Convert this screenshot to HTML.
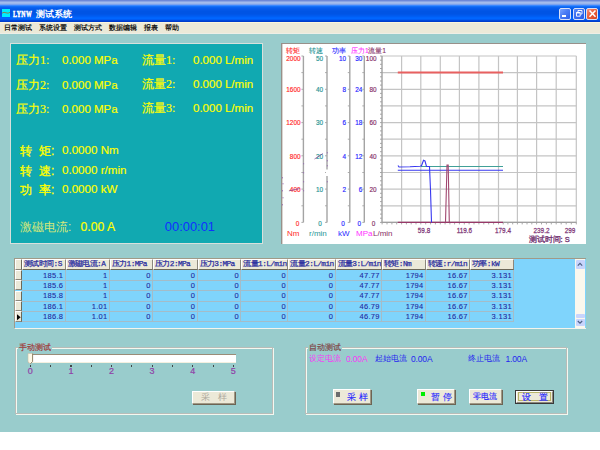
<!DOCTYPE html>
<html><head><meta charset="utf-8">
<style>
*{margin:0;padding:0;box-sizing:border-box}
html,body{width:600px;height:450px;overflow:hidden;background:#fff;font-family:"Liberation Sans",sans-serif}
.a{position:absolute;white-space:nowrap}
#title{position:absolute;left:0;top:0;width:600px;height:22px;background:linear-gradient(to bottom,#6c88d8 0px,#6c88d8 1px,#8aa4e4 1px,#8aa4e4 2px,#a4bcec 2px,#a4bcec 3px,#9ab6ec 3px,#9ab6ec 4px,#7aa2f0 4px,#7aa2f0 5px,#3a88ff 5px,#3a88ff 6px,#1470f8 6px,#1470f8 7px,#0a62f0 7px,#0a62f0 8px,#065cec 8px,#065cec 9px,#0458e8 9px,#0458e8 10px,#0256e6 10px,#0256e6 11px,#0054e4 11px,#0054e4 12px,#0054e4 12px,#0054e4 13px,#0054e4 13px,#0054e4 14px,#0056e8 14px,#0056e8 15px,#005aee 15px,#005aee 16px,#005ef4 16px,#005ef4 17px,#0064fc 17px,#0064fc 18px,#0066ff 18px,#0066ff 19px,#005cf4 19px,#005cf4 20px,#0048dc 20px,#0048dc 21px,#003ccc 21px,#003ccc 22px)}
#menu{position:absolute;left:0;top:22px;width:600px;height:12px;background:#ece9d8;border-top:1px solid #fbf5dc;border-bottom:1px solid #eeeee6}
#bg{position:absolute;left:0;top:34px;width:600px;height:398px;background:#99cccc}
.tb{position:absolute;top:8px;width:12px;height:12px;border:1px solid #d8e0f8;border-radius:2px}
.menu{position:absolute;top:23px;font-size:7px;line-height:9px;color:#000;-webkit-text-stroke:0.2px #000}
#lp{position:absolute;left:10px;top:43px;width:253px;height:201px;background:#11a9b1;border:1px solid #d8e0dc}
.y{color:#ffff00;font-size:12px;line-height:14px;-webkit-text-stroke:0.2px #ffff00}
.yb{-webkit-text-stroke:0.35px #ffff00}
.sf{font-family:"Liberation Serif",serif;-webkit-text-stroke:0.2px #ffff00}
.v{color:#ffff00;-webkit-text-stroke:0.2px #ffff00;font-size:11.5px;line-height:14px}
#cp{position:absolute;left:281px;top:43px;width:305px;height:201px;background:#fff;border-top:1px solid #98908a;border-left:1px solid #98908a;box-shadow:inset 1px 0 0 #d8d4d0}
#grid{position:absolute;left:14px;top:258px;width:572px;height:71px;background:#7fd4fc;border:1px solid #a8a490}
.hd{top:259px;height:11px;background:#ece9d8;border-right:1px solid #8c887c;border-bottom:1px solid #6c6858;border-left:1px solid #fff;border-top:1px solid #fff;font-family:"Liberation Mono",monospace;-webkit-text-stroke:0.25px #2a2ea0;font-size:7.8px;letter-spacing:-0.6px;line-height:9px;color:#2a2ea0;padding-left:1px;overflow:hidden}
.cell{position:absolute;font-family:"Liberation Sans",sans-serif;-webkit-text-stroke:0.1px #1f2aa0;letter-spacing:0.3px;font-size:7.5px;line-height:10px;color:#1f2aa0;text-align:right}
.gl{position:absolute;background:#a4bcc8}
.grp{position:absolute;border:1px solid #b8bcb8;box-shadow:inset 1px 1px 0 #f4f8f0,1px 1px 0 #f4f8f0}
.btn{position:absolute;background:#ece9d8;border:1px solid;border-color:#fff #a09884 #a09884 #fff;box-shadow:1px 1px 0 #6c6454;font-size:11px;line-height:12px;text-align:center;color:#1a2ae0}
</style></head><body>
<div id="title"></div>
<div class="a" style="left:2px;top:9px;width:8px;height:8px;background:#00f0ff"></div>
<svg class="a" style="left:2px;top:9px" width="8" height="8"><path d="M0 4.2 Q2 2.6 4 3.8 T8.5 3" stroke="#8a8050" stroke-width="1" fill="none"/></svg>
<div class="a" style="left:13.3px;top:9.8px;font:bold 8px/10px 'Liberation Serif';letter-spacing:0.6px;transform:scaleX(0.72);transform-origin:0 0;color:#fff;-webkit-text-stroke:0.5px #fff">LYNW</div>
<div class="a" style="left:36px;top:9px;font:bold 8.7px/10px 'Liberation Sans';color:#fff">测试系统</div>
<div class="tb" style="left:559px;background:linear-gradient(135deg,#7aa4ff 0%,#4a7cf4 45%,#2c60ea 100%)"><div class="a" style="left:2.2px;top:6.2px;width:4.2px;height:1.9px;background:#fff"></div></div>
<div class="tb" style="left:573px;background:linear-gradient(135deg,#5a8af8 0%,#3a6cf0 45%,#2a5ee8 100%)"><svg class="a" style="left:0;top:0" width="10" height="10"><path d="M4 3.3V1.5H8V5H6.5M2.5 3.5H6.2V7.2H2.5Z" stroke="#fff" stroke-width="0.9" fill="none"/><path d="M2.5 3.8H6.2" stroke="#fff" stroke-width="1.3"/></svg></div>
<div class="tb" style="left:586px;background:linear-gradient(135deg,#f4907a 0%,#e86040 45%,#d84420 100%)"><svg class="a" style="left:0;top:0" width="10" height="10"><path d="M2.5 1.5L8.5 7.8M8.5 1.5L2.5 7.8" stroke="#fff" stroke-width="1.5"/></svg></div>
<div id="menu"></div>
<div class="menu" style="left:4px">日常测试</div>
<div class="menu" style="left:39px">系统设置</div>
<div class="menu" style="left:74px">测试方式</div>
<div class="menu" style="left:109px">数据编辑</div>
<div class="menu" style="left:144px">报表</div>
<div class="menu" style="left:165px">帮助</div>
<div id="bg"></div>

<!-- left panel -->
<div id="lp"></div>
<div class="a y" style="left:16px;top:52.5px">压力<span class="sf">1:</span></div>
<div class="a v" style="left:62px;top:52.5px">0.000 MPa</div>
<div class="a y" style="left:16px;top:77.5px">压力<span class="sf">2:</span></div>
<div class="a v" style="left:62px;top:77.5px">0.000 MPa</div>
<div class="a y" style="left:16px;top:102.2px">压力<span class="sf">3:</span></div>
<div class="a v" style="left:62px;top:102.2px">0.000 MPa</div>
<div class="a y" style="left:142px;top:52.5px">流量<span class="sf">1:</span></div>
<div class="a v" style="left:193px;top:52.5px">0.000 L/min</div>
<div class="a y" style="left:142px;top:76.5px">流量<span class="sf">2:</span></div>
<div class="a v" style="left:193px;top:76.5px">0.000 L/min</div>
<div class="a y" style="left:142px;top:100.7px">流量<span class="sf">3:</span></div>
<div class="a v" style="left:193px;top:100.7px">0.000 L/min</div>
<div class="a y yb" style="left:20px;top:143.5px">转<span style="display:inline-block;width:7px"></span>矩:</div>
<div class="a v" style="left:62px;top:143px;font-size:11.6px">0.0000 Nm</div>
<div class="a y yb" style="left:20px;top:163.5px">转<span style="display:inline-block;width:7px"></span>速:</div>
<div class="a v" style="left:62px;top:163px;font-size:11.6px">0.0000 r/min</div>
<div class="a y yb" style="left:20px;top:182.5px">功<span style="display:inline-block;width:7px"></span>率:</div>
<div class="a v" style="left:62px;top:182px;font-size:11.6px">0.0000 kW</div>
<div class="a y" style="left:20px;top:220px;color:#d6e87a;-webkit-text-stroke:0">激磁电流:</div>
<div class="a v" style="left:80.5px;top:220px;font-size:12.2px">0.00 A</div>
<div class="a" style="left:164.8px;top:219px;font-size:12.9px;line-height:16px;color:#1030ff">00:00:01</div>

<!-- chart panel -->
<div id="cp"></div>
<svg class="a" style="left:0;top:0" width="600" height="450" font-family="Liberation Sans" font-size="8">
<line x1="382.0" y1="56.0" x2="576.4" y2="56.0" stroke="#c4c4c4" stroke-width="1.2"/>
<line x1="382.0" y1="72.6" x2="576.4" y2="72.6" stroke="#c4c4c4" stroke-width="1.2"/>
<line x1="382.0" y1="89.3" x2="576.4" y2="89.3" stroke="#c4c4c4" stroke-width="1.2"/>
<line x1="382.0" y1="105.9" x2="576.4" y2="105.9" stroke="#c4c4c4" stroke-width="1.2"/>
<line x1="382.0" y1="122.6" x2="576.4" y2="122.6" stroke="#c4c4c4" stroke-width="1.2"/>
<line x1="382.0" y1="139.2" x2="576.4" y2="139.2" stroke="#c4c4c4" stroke-width="1.2"/>
<line x1="382.0" y1="155.8" x2="576.4" y2="155.8" stroke="#c4c4c4" stroke-width="1.2"/>
<line x1="382.0" y1="172.5" x2="576.4" y2="172.5" stroke="#c4c4c4" stroke-width="1.2"/>
<line x1="382.0" y1="189.1" x2="576.4" y2="189.1" stroke="#c4c4c4" stroke-width="1.2"/>
<line x1="382.0" y1="205.8" x2="576.4" y2="205.8" stroke="#c4c4c4" stroke-width="1.2"/>
<line x1="382.0" y1="222.4" x2="576.4" y2="222.4" stroke="#c4c4c4" stroke-width="1.2"/>
<line x1="401.6" y1="56.0" x2="401.6" y2="222.4" stroke="#c4c4c4" stroke-width="1.2"/>
<line x1="420.8" y1="56.0" x2="420.8" y2="222.4" stroke="#c4c4c4" stroke-width="1.2"/>
<line x1="440.3" y1="56.0" x2="440.3" y2="222.4" stroke="#c4c4c4" stroke-width="1.2"/>
<line x1="459.4" y1="56.0" x2="459.4" y2="222.4" stroke="#c4c4c4" stroke-width="1.2"/>
<line x1="478.9" y1="56.0" x2="478.9" y2="222.4" stroke="#c4c4c4" stroke-width="1.2"/>
<line x1="498.5" y1="56.0" x2="498.5" y2="222.4" stroke="#c4c4c4" stroke-width="1.2"/>
<line x1="517.4" y1="56.0" x2="517.4" y2="222.4" stroke="#c4c4c4" stroke-width="1.2"/>
<line x1="536.6" y1="56.0" x2="536.6" y2="222.4" stroke="#c4c4c4" stroke-width="1.2"/>
<line x1="556.2" y1="56.0" x2="556.2" y2="222.4" stroke="#c4c4c4" stroke-width="1.2"/>
<line x1="576.3" y1="56.0" x2="576.3" y2="222.4" stroke="#c4c4c4" stroke-width="1.2"/>
<line x1="380.0" y1="56.0" x2="382.0" y2="56.0" stroke="#909090" stroke-width="0.8"/>
<line x1="380.0" y1="60.2" x2="382.0" y2="60.2" stroke="#909090" stroke-width="0.8"/>
<line x1="380.0" y1="64.3" x2="382.0" y2="64.3" stroke="#909090" stroke-width="0.8"/>
<line x1="380.0" y1="68.5" x2="382.0" y2="68.5" stroke="#909090" stroke-width="0.8"/>
<line x1="380.0" y1="72.6" x2="382.0" y2="72.6" stroke="#909090" stroke-width="0.8"/>
<line x1="380.0" y1="76.8" x2="382.0" y2="76.8" stroke="#909090" stroke-width="0.8"/>
<line x1="380.0" y1="81.0" x2="382.0" y2="81.0" stroke="#909090" stroke-width="0.8"/>
<line x1="380.0" y1="85.1" x2="382.0" y2="85.1" stroke="#909090" stroke-width="0.8"/>
<line x1="380.0" y1="89.3" x2="382.0" y2="89.3" stroke="#909090" stroke-width="0.8"/>
<line x1="380.0" y1="93.4" x2="382.0" y2="93.4" stroke="#909090" stroke-width="0.8"/>
<line x1="380.0" y1="97.6" x2="382.0" y2="97.6" stroke="#909090" stroke-width="0.8"/>
<line x1="380.0" y1="101.8" x2="382.0" y2="101.8" stroke="#909090" stroke-width="0.8"/>
<line x1="380.0" y1="105.9" x2="382.0" y2="105.9" stroke="#909090" stroke-width="0.8"/>
<line x1="380.0" y1="110.1" x2="382.0" y2="110.1" stroke="#909090" stroke-width="0.8"/>
<line x1="380.0" y1="114.2" x2="382.0" y2="114.2" stroke="#909090" stroke-width="0.8"/>
<line x1="380.0" y1="118.4" x2="382.0" y2="118.4" stroke="#909090" stroke-width="0.8"/>
<line x1="380.0" y1="122.6" x2="382.0" y2="122.6" stroke="#909090" stroke-width="0.8"/>
<line x1="380.0" y1="126.7" x2="382.0" y2="126.7" stroke="#909090" stroke-width="0.8"/>
<line x1="380.0" y1="130.9" x2="382.0" y2="130.9" stroke="#909090" stroke-width="0.8"/>
<line x1="380.0" y1="135.0" x2="382.0" y2="135.0" stroke="#909090" stroke-width="0.8"/>
<line x1="380.0" y1="139.2" x2="382.0" y2="139.2" stroke="#909090" stroke-width="0.8"/>
<line x1="380.0" y1="143.4" x2="382.0" y2="143.4" stroke="#909090" stroke-width="0.8"/>
<line x1="380.0" y1="147.5" x2="382.0" y2="147.5" stroke="#909090" stroke-width="0.8"/>
<line x1="380.0" y1="151.7" x2="382.0" y2="151.7" stroke="#909090" stroke-width="0.8"/>
<line x1="380.0" y1="155.8" x2="382.0" y2="155.8" stroke="#909090" stroke-width="0.8"/>
<line x1="380.0" y1="160.0" x2="382.0" y2="160.0" stroke="#909090" stroke-width="0.8"/>
<line x1="380.0" y1="164.2" x2="382.0" y2="164.2" stroke="#909090" stroke-width="0.8"/>
<line x1="380.0" y1="168.3" x2="382.0" y2="168.3" stroke="#909090" stroke-width="0.8"/>
<line x1="380.0" y1="172.5" x2="382.0" y2="172.5" stroke="#909090" stroke-width="0.8"/>
<line x1="380.0" y1="176.6" x2="382.0" y2="176.6" stroke="#909090" stroke-width="0.8"/>
<line x1="380.0" y1="180.8" x2="382.0" y2="180.8" stroke="#909090" stroke-width="0.8"/>
<line x1="380.0" y1="185.0" x2="382.0" y2="185.0" stroke="#909090" stroke-width="0.8"/>
<line x1="380.0" y1="189.1" x2="382.0" y2="189.1" stroke="#909090" stroke-width="0.8"/>
<line x1="380.0" y1="193.3" x2="382.0" y2="193.3" stroke="#909090" stroke-width="0.8"/>
<line x1="380.0" y1="197.4" x2="382.0" y2="197.4" stroke="#909090" stroke-width="0.8"/>
<line x1="380.0" y1="201.6" x2="382.0" y2="201.6" stroke="#909090" stroke-width="0.8"/>
<line x1="380.0" y1="205.8" x2="382.0" y2="205.8" stroke="#909090" stroke-width="0.8"/>
<line x1="380.0" y1="209.9" x2="382.0" y2="209.9" stroke="#909090" stroke-width="0.8"/>
<line x1="380.0" y1="214.1" x2="382.0" y2="214.1" stroke="#909090" stroke-width="0.8"/>
<line x1="380.0" y1="218.2" x2="382.0" y2="218.2" stroke="#909090" stroke-width="0.8"/>
<line x1="380.0" y1="222.4" x2="382.0" y2="222.4" stroke="#909090" stroke-width="0.8"/>
<line x1="382.1" y1="222.4" x2="382.1" y2="224.4" stroke="#909090" stroke-width="0.8"/>
<line x1="387.0" y1="222.4" x2="387.0" y2="224.4" stroke="#909090" stroke-width="0.8"/>
<line x1="391.9" y1="222.4" x2="391.9" y2="224.4" stroke="#909090" stroke-width="0.8"/>
<line x1="396.7" y1="222.4" x2="396.7" y2="224.4" stroke="#909090" stroke-width="0.8"/>
<line x1="401.6" y1="222.4" x2="401.6" y2="224.4" stroke="#909090" stroke-width="0.8"/>
<line x1="406.4" y1="222.4" x2="406.4" y2="224.4" stroke="#909090" stroke-width="0.8"/>
<line x1="411.2" y1="222.4" x2="411.2" y2="224.4" stroke="#909090" stroke-width="0.8"/>
<line x1="416.0" y1="222.4" x2="416.0" y2="224.4" stroke="#909090" stroke-width="0.8"/>
<line x1="420.8" y1="222.4" x2="420.8" y2="224.4" stroke="#909090" stroke-width="0.8"/>
<line x1="425.7" y1="222.4" x2="425.7" y2="224.4" stroke="#909090" stroke-width="0.8"/>
<line x1="430.6" y1="222.4" x2="430.6" y2="224.4" stroke="#909090" stroke-width="0.8"/>
<line x1="435.4" y1="222.4" x2="435.4" y2="224.4" stroke="#909090" stroke-width="0.8"/>
<line x1="440.3" y1="222.4" x2="440.3" y2="224.4" stroke="#909090" stroke-width="0.8"/>
<line x1="445.1" y1="222.4" x2="445.1" y2="224.4" stroke="#909090" stroke-width="0.8"/>
<line x1="449.9" y1="222.4" x2="449.9" y2="224.4" stroke="#909090" stroke-width="0.8"/>
<line x1="454.6" y1="222.4" x2="454.6" y2="224.4" stroke="#909090" stroke-width="0.8"/>
<line x1="459.4" y1="222.4" x2="459.4" y2="224.4" stroke="#909090" stroke-width="0.8"/>
<line x1="464.3" y1="222.4" x2="464.3" y2="224.4" stroke="#909090" stroke-width="0.8"/>
<line x1="469.1" y1="222.4" x2="469.1" y2="224.4" stroke="#909090" stroke-width="0.8"/>
<line x1="474.0" y1="222.4" x2="474.0" y2="224.4" stroke="#909090" stroke-width="0.8"/>
<line x1="478.9" y1="222.4" x2="478.9" y2="224.4" stroke="#909090" stroke-width="0.8"/>
<line x1="483.8" y1="222.4" x2="483.8" y2="224.4" stroke="#909090" stroke-width="0.8"/>
<line x1="488.7" y1="222.4" x2="488.7" y2="224.4" stroke="#909090" stroke-width="0.8"/>
<line x1="493.6" y1="222.4" x2="493.6" y2="224.4" stroke="#909090" stroke-width="0.8"/>
<line x1="498.5" y1="222.4" x2="498.5" y2="224.4" stroke="#909090" stroke-width="0.8"/>
<line x1="503.2" y1="222.4" x2="503.2" y2="224.4" stroke="#909090" stroke-width="0.8"/>
<line x1="507.9" y1="222.4" x2="507.9" y2="224.4" stroke="#909090" stroke-width="0.8"/>
<line x1="512.7" y1="222.4" x2="512.7" y2="224.4" stroke="#909090" stroke-width="0.8"/>
<line x1="517.4" y1="222.4" x2="517.4" y2="224.4" stroke="#909090" stroke-width="0.8"/>
<line x1="522.2" y1="222.4" x2="522.2" y2="224.4" stroke="#909090" stroke-width="0.8"/>
<line x1="527.0" y1="222.4" x2="527.0" y2="224.4" stroke="#909090" stroke-width="0.8"/>
<line x1="531.8" y1="222.4" x2="531.8" y2="224.4" stroke="#909090" stroke-width="0.8"/>
<line x1="536.6" y1="222.4" x2="536.6" y2="224.4" stroke="#909090" stroke-width="0.8"/>
<line x1="541.5" y1="222.4" x2="541.5" y2="224.4" stroke="#909090" stroke-width="0.8"/>
<line x1="546.4" y1="222.4" x2="546.4" y2="224.4" stroke="#909090" stroke-width="0.8"/>
<line x1="551.3" y1="222.4" x2="551.3" y2="224.4" stroke="#909090" stroke-width="0.8"/>
<line x1="556.2" y1="222.4" x2="556.2" y2="224.4" stroke="#909090" stroke-width="0.8"/>
<line x1="561.2" y1="222.4" x2="561.2" y2="224.4" stroke="#909090" stroke-width="0.8"/>
<line x1="566.2" y1="222.4" x2="566.2" y2="224.4" stroke="#909090" stroke-width="0.8"/>
<line x1="571.3" y1="222.4" x2="571.3" y2="224.4" stroke="#909090" stroke-width="0.8"/>
<line x1="576.3" y1="222.4" x2="576.3" y2="224.4" stroke="#909090" stroke-width="0.8"/>
<line x1="382.0" y1="56.0" x2="382.0" y2="222.4" stroke="#a0a0a0" stroke-width="1.4"/>
<line x1="382.0" y1="222.4" x2="576.4" y2="222.4" stroke="#a0a0a0" stroke-width="1.4"/>
<line x1="303.4" y1="56.0" x2="303.4" y2="222.4" stroke="#a4a4a4" stroke-width="1.4"/>
<line x1="301.4" y1="56.0" x2="303.4" y2="56.0" stroke="#a4a4a4" stroke-width="0.9"/>
<line x1="301.4" y1="72.6" x2="303.4" y2="72.6" stroke="#a4a4a4" stroke-width="0.9"/>
<line x1="301.4" y1="89.3" x2="303.4" y2="89.3" stroke="#a4a4a4" stroke-width="0.9"/>
<line x1="301.4" y1="105.9" x2="303.4" y2="105.9" stroke="#a4a4a4" stroke-width="0.9"/>
<line x1="301.4" y1="122.6" x2="303.4" y2="122.6" stroke="#a4a4a4" stroke-width="0.9"/>
<line x1="301.4" y1="139.2" x2="303.4" y2="139.2" stroke="#a4a4a4" stroke-width="0.9"/>
<line x1="301.4" y1="155.8" x2="303.4" y2="155.8" stroke="#a4a4a4" stroke-width="0.9"/>
<line x1="301.4" y1="172.5" x2="303.4" y2="172.5" stroke="#a4a4a4" stroke-width="0.9"/>
<line x1="301.4" y1="189.1" x2="303.4" y2="189.1" stroke="#a4a4a4" stroke-width="0.9"/>
<line x1="301.4" y1="205.8" x2="303.4" y2="205.8" stroke="#a4a4a4" stroke-width="0.9"/>
<line x1="301.4" y1="222.4" x2="303.4" y2="222.4" stroke="#a4a4a4" stroke-width="0.9"/>
<line x1="327.0" y1="56.0" x2="327.0" y2="222.4" stroke="#a4a4a4" stroke-width="1.4"/>
<line x1="325.0" y1="56.0" x2="327.0" y2="56.0" stroke="#a4a4a4" stroke-width="0.9"/>
<line x1="325.0" y1="72.6" x2="327.0" y2="72.6" stroke="#a4a4a4" stroke-width="0.9"/>
<line x1="325.0" y1="89.3" x2="327.0" y2="89.3" stroke="#a4a4a4" stroke-width="0.9"/>
<line x1="325.0" y1="105.9" x2="327.0" y2="105.9" stroke="#a4a4a4" stroke-width="0.9"/>
<line x1="325.0" y1="122.6" x2="327.0" y2="122.6" stroke="#a4a4a4" stroke-width="0.9"/>
<line x1="325.0" y1="139.2" x2="327.0" y2="139.2" stroke="#a4a4a4" stroke-width="0.9"/>
<line x1="325.0" y1="155.8" x2="327.0" y2="155.8" stroke="#a4a4a4" stroke-width="0.9"/>
<line x1="325.0" y1="172.5" x2="327.0" y2="172.5" stroke="#a4a4a4" stroke-width="0.9"/>
<line x1="325.0" y1="189.1" x2="327.0" y2="189.1" stroke="#a4a4a4" stroke-width="0.9"/>
<line x1="325.0" y1="205.8" x2="327.0" y2="205.8" stroke="#a4a4a4" stroke-width="0.9"/>
<line x1="325.0" y1="222.4" x2="327.0" y2="222.4" stroke="#a4a4a4" stroke-width="0.9"/>
<line x1="349.8" y1="56.0" x2="349.8" y2="222.4" stroke="#a4a4a4" stroke-width="1.4"/>
<line x1="347.8" y1="56.0" x2="349.8" y2="56.0" stroke="#a4a4a4" stroke-width="0.9"/>
<line x1="347.8" y1="72.6" x2="349.8" y2="72.6" stroke="#a4a4a4" stroke-width="0.9"/>
<line x1="347.8" y1="89.3" x2="349.8" y2="89.3" stroke="#a4a4a4" stroke-width="0.9"/>
<line x1="347.8" y1="105.9" x2="349.8" y2="105.9" stroke="#a4a4a4" stroke-width="0.9"/>
<line x1="347.8" y1="122.6" x2="349.8" y2="122.6" stroke="#a4a4a4" stroke-width="0.9"/>
<line x1="347.8" y1="139.2" x2="349.8" y2="139.2" stroke="#a4a4a4" stroke-width="0.9"/>
<line x1="347.8" y1="155.8" x2="349.8" y2="155.8" stroke="#a4a4a4" stroke-width="0.9"/>
<line x1="347.8" y1="172.5" x2="349.8" y2="172.5" stroke="#a4a4a4" stroke-width="0.9"/>
<line x1="347.8" y1="189.1" x2="349.8" y2="189.1" stroke="#a4a4a4" stroke-width="0.9"/>
<line x1="347.8" y1="205.8" x2="349.8" y2="205.8" stroke="#a4a4a4" stroke-width="0.9"/>
<line x1="347.8" y1="222.4" x2="349.8" y2="222.4" stroke="#a4a4a4" stroke-width="0.9"/>
<line x1="364.3" y1="56.0" x2="364.3" y2="222.4" stroke="#a4a4a4" stroke-width="1.4"/>
<line x1="362.3" y1="56.0" x2="364.3" y2="56.0" stroke="#a4a4a4" stroke-width="0.9"/>
<line x1="362.3" y1="72.6" x2="364.3" y2="72.6" stroke="#a4a4a4" stroke-width="0.9"/>
<line x1="362.3" y1="89.3" x2="364.3" y2="89.3" stroke="#a4a4a4" stroke-width="0.9"/>
<line x1="362.3" y1="105.9" x2="364.3" y2="105.9" stroke="#a4a4a4" stroke-width="0.9"/>
<line x1="362.3" y1="122.6" x2="364.3" y2="122.6" stroke="#a4a4a4" stroke-width="0.9"/>
<line x1="362.3" y1="139.2" x2="364.3" y2="139.2" stroke="#a4a4a4" stroke-width="0.9"/>
<line x1="362.3" y1="155.8" x2="364.3" y2="155.8" stroke="#a4a4a4" stroke-width="0.9"/>
<line x1="362.3" y1="172.5" x2="364.3" y2="172.5" stroke="#a4a4a4" stroke-width="0.9"/>
<line x1="362.3" y1="189.1" x2="364.3" y2="189.1" stroke="#a4a4a4" stroke-width="0.9"/>
<line x1="362.3" y1="205.8" x2="364.3" y2="205.8" stroke="#a4a4a4" stroke-width="0.9"/>
<line x1="362.3" y1="222.4" x2="364.3" y2="222.4" stroke="#a4a4a4" stroke-width="0.9"/>
<text transform="translate(300.5 60.8) scale(0.8 1)" fill="#ff2c2c" stroke="#ff2c2c" stroke-width="0.2" text-anchor="end">2000</text>
<text transform="translate(300.5 92.1) scale(0.8 1)" fill="#ff2c2c" stroke="#ff2c2c" stroke-width="0.2" text-anchor="end">1600</text>
<text transform="translate(300.5 125.4) scale(0.8 1)" fill="#ff2c2c" stroke="#ff2c2c" stroke-width="0.2" text-anchor="end">1200</text>
<text transform="translate(300.5 158.6) scale(0.8 1)" fill="#ff2c2c" stroke="#ff2c2c" stroke-width="0.2" text-anchor="end">800</text>
<text transform="translate(300.5 191.9) scale(0.8 1)" fill="#ff2c2c" stroke="#ff2c2c" stroke-width="0.2" text-anchor="end">400</text>
<text transform="translate(299.3 225.8) scale(0.8 1)" fill="#ff2c2c" stroke="#ff2c2c" stroke-width="0.2" text-anchor="end">0</text>
<text transform="translate(323.0 60.8) scale(0.8 1)" fill="#2a9696" stroke="#2a9696" stroke-width="0.2" text-anchor="end">50</text>
<text transform="translate(323.0 92.1) scale(0.8 1)" fill="#2a9696" stroke="#2a9696" stroke-width="0.2" text-anchor="end">40</text>
<text transform="translate(323.0 125.4) scale(0.8 1)" fill="#2a9696" stroke="#2a9696" stroke-width="0.2" text-anchor="end">30</text>
<text transform="translate(323.0 158.6) scale(0.8 1)" fill="#2a9696" stroke="#2a9696" stroke-width="0.2" text-anchor="end">20</text>
<text transform="translate(323.0 191.9) scale(0.8 1)" fill="#2a9696" stroke="#2a9696" stroke-width="0.2" text-anchor="end">10</text>
<text transform="translate(321.8 225.8) scale(0.8 1)" fill="#2a9696" stroke="#2a9696" stroke-width="0.2" text-anchor="end">0</text>
<text transform="translate(346.0 60.8) scale(0.8 1)" fill="#2a2aff" stroke="#2a2aff" stroke-width="0.2" text-anchor="end">10</text>
<text transform="translate(346.0 92.1) scale(0.8 1)" fill="#2a2aff" stroke="#2a2aff" stroke-width="0.2" text-anchor="end">8</text>
<text transform="translate(346.0 125.4) scale(0.8 1)" fill="#2a2aff" stroke="#2a2aff" stroke-width="0.2" text-anchor="end">6</text>
<text transform="translate(346.0 158.6) scale(0.8 1)" fill="#2a2aff" stroke="#2a2aff" stroke-width="0.2" text-anchor="end">4</text>
<text transform="translate(346.0 191.9) scale(0.8 1)" fill="#2a2aff" stroke="#2a2aff" stroke-width="0.2" text-anchor="end">2</text>
<text transform="translate(344.8 225.8) scale(0.8 1)" fill="#2a2aff" stroke="#2a2aff" stroke-width="0.2" text-anchor="end">0</text>
<text transform="translate(362.3 60.8) scale(0.8 1)" fill="#2a2aff" stroke="#2a2aff" stroke-width="0.2" text-anchor="end">30</text>
<text transform="translate(362.3 92.1) scale(0.8 1)" fill="#2a2aff" stroke="#2a2aff" stroke-width="0.2" text-anchor="end">24</text>
<text transform="translate(362.3 125.4) scale(0.8 1)" fill="#2a2aff" stroke="#2a2aff" stroke-width="0.2" text-anchor="end">18</text>
<text transform="translate(362.3 158.6) scale(0.8 1)" fill="#2a2aff" stroke="#2a2aff" stroke-width="0.2" text-anchor="end">12</text>
<text transform="translate(362.3 191.9) scale(0.8 1)" fill="#2a2aff" stroke="#2a2aff" stroke-width="0.2" text-anchor="end">6</text>
<text transform="translate(361.1 225.8) scale(0.8 1)" fill="#2a2aff" stroke="#2a2aff" stroke-width="0.2" text-anchor="end">0</text>
<text transform="translate(376.5 60.8) scale(0.8 1)" fill="#863066" stroke="#863066" stroke-width="0.2" text-anchor="end">100</text>
<text transform="translate(376.5 92.1) scale(0.8 1)" fill="#863066" stroke="#863066" stroke-width="0.2" text-anchor="end">80</text>
<text transform="translate(376.5 125.4) scale(0.8 1)" fill="#863066" stroke="#863066" stroke-width="0.2" text-anchor="end">60</text>
<text transform="translate(376.5 158.6) scale(0.8 1)" fill="#863066" stroke="#863066" stroke-width="0.2" text-anchor="end">40</text>
<text transform="translate(376.5 191.9) scale(0.8 1)" fill="#863066" stroke="#863066" stroke-width="0.2" text-anchor="end">20</text>
<text transform="translate(375.3 225.8) scale(0.8 1)" fill="#863066" stroke="#863066" stroke-width="0.2" text-anchor="end">0</text>
<text x="286" y="53.3" fill="#ff2c2c" font-size="7" stroke="#ff2c2c" stroke-width="0.12">转矩</text>
<text x="309" y="53.3" fill="#2a9696" font-size="7" stroke="#2a9696" stroke-width="0.12">转速</text>
<text x="332" y="53.3" fill="#2a2aff" font-size="7" stroke="#2a2aff" stroke-width="0.12">功率</text>
<text x="351" y="53.3" fill="#ff30ff" font-size="6.8" stroke="#ff30ff" stroke-width="0.12">压力1</text>
<text x="368.3" y="53.3" fill="#863066" font-size="6.8" stroke="#863066" stroke-width="0.12">流量1</text>
<text x="287" y="236.3" fill="#ff2c2c">Nm</text>
<text x="309" y="236.3" fill="#2a9696">r/min</text>
<text x="338" y="236.3" fill="#2a2aff">kW</text>
<text x="356" y="236.3" fill="#ff30ff">MPa</text>
<text x="373" y="236.3" fill="#863066">L/min</text>
<text transform="translate(424 232.5) scale(0.8 1)" fill="#803878" stroke="#803878" stroke-width="0.25" text-anchor="middle">59.8</text>
<text transform="translate(464.4 232.5) scale(0.8 1)" fill="#803878" stroke="#803878" stroke-width="0.25" text-anchor="middle">119.6</text>
<text transform="translate(503 232.5) scale(0.8 1)" fill="#803878" stroke="#803878" stroke-width="0.25" text-anchor="middle">179.4</text>
<text transform="translate(541.5 232.5) scale(0.8 1)" fill="#803878" stroke="#803878" stroke-width="0.25" text-anchor="middle">239.2</text>
<text transform="translate(570 232.5) scale(0.8 1)" fill="#803878" stroke="#803878" stroke-width="0.25" text-anchor="middle">299</text>
<text x="528.5" y="242" fill="#703070" stroke="#703070" stroke-width="0.3" font-size="7.5">测试时间: S</text>
<line x1="397.8" y1="72.6" x2="503" y2="72.6" stroke="#e86060" stroke-width="2"/>
<line x1="397.8" y1="222.4" x2="503" y2="222.4" stroke="#983868" stroke-width="1.3"/>
<line x1="421" y1="166.5" x2="503" y2="166.5" stroke="#40a098" stroke-width="1.1"/>
<line x1="397.8" y1="170.3" x2="503" y2="170.3" stroke="#3838f0" stroke-width="1.1"/>
<polyline points="398,165.5 399,167 410,166.8 420,166.2 421.5,165.8 423.5,160.3 425,161 426.5,166.5 429.5,166.5 430.5,190 431.5,222.4" stroke="#3838f0" stroke-width="1.1" fill="none"/>
<polyline points="445.5,222.4 447,165 448.2,165 449.3,222.4" stroke="#a04870" stroke-width="1.1" fill="none"/>
<path d="M314.5 159L323 153.5M288.9 190.9L299.8 188.5" stroke="#703090" stroke-width="0.8" opacity="0.8" fill="none"/>
<rect x="303.1" y="163" width="1" height="1.4" fill="#9060b0" opacity="0.7"/>
<rect x="303.1" y="172" width="1" height="1.4" fill="#9060b0" opacity="0.7"/>
<rect x="303.1" y="181" width="1" height="1.4" fill="#9060b0" opacity="0.7"/>
<rect x="303.1" y="190" width="1" height="1.4" fill="#9060b0" opacity="0.7"/>
<rect x="282.0" y="177" width="1" height="1.4" fill="#9060b0" opacity="0.7"/>
<rect x="282.5" y="183" width="1" height="1.4" fill="#9060b0" opacity="0.7"/>
<rect x="282.0" y="190" width="1" height="1.4" fill="#9060b0" opacity="0.7"/>
<rect x="282.5" y="197" width="1" height="1.4" fill="#9060b0" opacity="0.7"/>
<rect x="282.0" y="204" width="1" height="1.4" fill="#9060b0" opacity="0.7"/>
<rect x="326.8" y="152" width="1" height="1.4" fill="#9060b0" opacity="0.7"/>
<rect x="326.8" y="160" width="1" height="1.4" fill="#9060b0" opacity="0.7"/>
<rect x="326.8" y="165" width="1" height="1.4" fill="#9060b0" opacity="0.7"/>
<rect x="326.8" y="181" width="1" height="1.4" fill="#9060b0" opacity="0.7"/>
<rect x="326" y="169.5" width="2.5" height="6.5" fill="#fff"/>
</svg>

<!-- grid -->
<div class="a" style="left:14px;top:258px;width:572px;height:71px;background:#7fd4fc;border-top:1px solid #a09a88;border-left:1px solid #a09a88;border-bottom:1px solid #f4f4ec"></div>
<div class="a" style="left:15px;top:259px;width:7px;height:11px;background:#ece9d8;border-top:1px solid #fff;border-left:1px solid #fff;border-right:1px solid #6c6858;border-bottom:1px solid #8c887c"></div>
<div class="a hd" style="left:22.00px;width:43.50px">测试时间:S</div>
<div class="a hd" style="left:65.50px;width:44.25px">激磁电流:A</div>
<div class="a hd" style="left:109.75px;width:43.25px">压力1:MPa</div>
<div class="a hd" style="left:153.00px;width:44.50px">压力2:MPa</div>
<div class="a hd" style="left:197.50px;width:43.75px">压力3:MPa</div>
<div class="a hd" style="left:241.25px;width:47.00px">流量1:L/min</div>
<div class="a hd" style="left:288.25px;width:47.25px">流量2:L/min</div>
<div class="a hd" style="left:335.50px;width:46.50px">流量3:L/min</div>
<div class="a hd" style="left:382.00px;width:43.75px">转矩:Nm</div>
<div class="a hd" style="left:425.75px;width:44.25px">转速:r/min</div>
<div class="a hd" style="left:470.00px;width:44.10px">功率:kW</div>
<div class="a" style="left:15px;top:269.60px;width:7px;height:10.45px;background:#ece9d8;border-top:1px solid #fff;border-left:1px solid #fff;border-right:1px solid #6c6858;border-bottom:1px solid #8c887c"></div>
<div class="gl" style="left:22px;top:279.65px;width:492px;height:1px"></div>
<div class="a cell" style="left:22.00px;top:270.50px;width:41.30px;height:10.45px">185.1</div>
<div class="a cell" style="left:65.50px;top:270.50px;width:42.05px;height:10.45px">1</div>
<div class="a cell" style="left:109.75px;top:270.50px;width:41.05px;height:10.45px">0</div>
<div class="a cell" style="left:153.00px;top:270.50px;width:42.30px;height:10.45px">0</div>
<div class="a cell" style="left:197.50px;top:270.50px;width:41.55px;height:10.45px">0</div>
<div class="a cell" style="left:241.25px;top:270.50px;width:44.80px;height:10.45px">0</div>
<div class="a cell" style="left:288.25px;top:270.50px;width:45.05px;height:10.45px">0</div>
<div class="a cell" style="left:335.50px;top:270.50px;width:44.30px;height:10.45px">47.77</div>
<div class="a cell" style="left:382.00px;top:270.50px;width:41.55px;height:10.45px">1794</div>
<div class="a cell" style="left:425.75px;top:270.50px;width:42.05px;height:10.45px">16.67</div>
<div class="a cell" style="left:470.00px;top:270.50px;width:41.90px;height:10.45px">3.131</div>
<div class="a" style="left:15px;top:280.05px;width:7px;height:10.45px;background:#ece9d8;border-top:1px solid #fff;border-left:1px solid #fff;border-right:1px solid #6c6858;border-bottom:1px solid #8c887c"></div>
<div class="gl" style="left:22px;top:290.10px;width:492px;height:1px"></div>
<div class="a cell" style="left:22.00px;top:280.95px;width:41.30px;height:10.45px">185.6</div>
<div class="a cell" style="left:65.50px;top:280.95px;width:42.05px;height:10.45px">1</div>
<div class="a cell" style="left:109.75px;top:280.95px;width:41.05px;height:10.45px">0</div>
<div class="a cell" style="left:153.00px;top:280.95px;width:42.30px;height:10.45px">0</div>
<div class="a cell" style="left:197.50px;top:280.95px;width:41.55px;height:10.45px">0</div>
<div class="a cell" style="left:241.25px;top:280.95px;width:44.80px;height:10.45px">0</div>
<div class="a cell" style="left:288.25px;top:280.95px;width:45.05px;height:10.45px">0</div>
<div class="a cell" style="left:335.50px;top:280.95px;width:44.30px;height:10.45px">47.77</div>
<div class="a cell" style="left:382.00px;top:280.95px;width:41.55px;height:10.45px">1794</div>
<div class="a cell" style="left:425.75px;top:280.95px;width:42.05px;height:10.45px">16.67</div>
<div class="a cell" style="left:470.00px;top:280.95px;width:41.90px;height:10.45px">3.131</div>
<div class="a" style="left:15px;top:290.50px;width:7px;height:10.45px;background:#ece9d8;border-top:1px solid #fff;border-left:1px solid #fff;border-right:1px solid #6c6858;border-bottom:1px solid #8c887c"></div>
<div class="gl" style="left:22px;top:300.55px;width:492px;height:1px"></div>
<div class="a cell" style="left:22.00px;top:291.40px;width:41.30px;height:10.45px">185.8</div>
<div class="a cell" style="left:65.50px;top:291.40px;width:42.05px;height:10.45px">1</div>
<div class="a cell" style="left:109.75px;top:291.40px;width:41.05px;height:10.45px">0</div>
<div class="a cell" style="left:153.00px;top:291.40px;width:42.30px;height:10.45px">0</div>
<div class="a cell" style="left:197.50px;top:291.40px;width:41.55px;height:10.45px">0</div>
<div class="a cell" style="left:241.25px;top:291.40px;width:44.80px;height:10.45px">0</div>
<div class="a cell" style="left:288.25px;top:291.40px;width:45.05px;height:10.45px">0</div>
<div class="a cell" style="left:335.50px;top:291.40px;width:44.30px;height:10.45px">47.77</div>
<div class="a cell" style="left:382.00px;top:291.40px;width:41.55px;height:10.45px">1794</div>
<div class="a cell" style="left:425.75px;top:291.40px;width:42.05px;height:10.45px">16.67</div>
<div class="a cell" style="left:470.00px;top:291.40px;width:41.90px;height:10.45px">3.131</div>
<div class="a" style="left:15px;top:300.95px;width:7px;height:10.45px;background:#ece9d8;border-top:1px solid #fff;border-left:1px solid #fff;border-right:1px solid #6c6858;border-bottom:1px solid #8c887c"></div>
<div class="gl" style="left:22px;top:311.00px;width:492px;height:1px"></div>
<div class="a cell" style="left:22.00px;top:301.85px;width:41.30px;height:10.45px">186.1</div>
<div class="a cell" style="left:65.50px;top:301.85px;width:42.05px;height:10.45px">1.01</div>
<div class="a cell" style="left:109.75px;top:301.85px;width:41.05px;height:10.45px">0</div>
<div class="a cell" style="left:153.00px;top:301.85px;width:42.30px;height:10.45px">0</div>
<div class="a cell" style="left:197.50px;top:301.85px;width:41.55px;height:10.45px">0</div>
<div class="a cell" style="left:241.25px;top:301.85px;width:44.80px;height:10.45px">0</div>
<div class="a cell" style="left:288.25px;top:301.85px;width:45.05px;height:10.45px">0</div>
<div class="a cell" style="left:335.50px;top:301.85px;width:44.30px;height:10.45px">46.79</div>
<div class="a cell" style="left:382.00px;top:301.85px;width:41.55px;height:10.45px">1794</div>
<div class="a cell" style="left:425.75px;top:301.85px;width:42.05px;height:10.45px">16.67</div>
<div class="a cell" style="left:470.00px;top:301.85px;width:41.90px;height:10.45px">3.131</div>
<div class="a" style="left:15px;top:311.40px;width:7px;height:10.45px;background:#ece9d8;border-top:1px solid #fff;border-left:1px solid #fff;border-right:1px solid #6c6858;border-bottom:1px solid #8c887c"></div>
<div class="gl" style="left:22px;top:321.45px;width:492px;height:1px"></div>
<div class="a cell" style="left:22.00px;top:312.30px;width:41.30px;height:10.45px">186.8</div>
<div class="a cell" style="left:65.50px;top:312.30px;width:42.05px;height:10.45px">1.01</div>
<div class="a cell" style="left:109.75px;top:312.30px;width:41.05px;height:10.45px">0</div>
<div class="a cell" style="left:153.00px;top:312.30px;width:42.30px;height:10.45px">0</div>
<div class="a cell" style="left:197.50px;top:312.30px;width:41.55px;height:10.45px">0</div>
<div class="a cell" style="left:241.25px;top:312.30px;width:44.80px;height:10.45px">0</div>
<div class="a cell" style="left:288.25px;top:312.30px;width:45.05px;height:10.45px">0</div>
<div class="a cell" style="left:335.50px;top:312.30px;width:44.30px;height:10.45px">46.79</div>
<div class="a cell" style="left:382.00px;top:312.30px;width:41.55px;height:10.45px">1794</div>
<div class="a cell" style="left:425.75px;top:312.30px;width:42.05px;height:10.45px">16.67</div>
<div class="a cell" style="left:470.00px;top:312.30px;width:41.90px;height:10.45px">3.131</div>
<div class="gl" style="left:64.50px;top:269.60px;width:1px;height:52.25px"></div>
<div class="gl" style="left:108.75px;top:269.60px;width:1px;height:52.25px"></div>
<div class="gl" style="left:152.00px;top:269.60px;width:1px;height:52.25px"></div>
<div class="gl" style="left:196.50px;top:269.60px;width:1px;height:52.25px"></div>
<div class="gl" style="left:240.25px;top:269.60px;width:1px;height:52.25px"></div>
<div class="gl" style="left:287.25px;top:269.60px;width:1px;height:52.25px"></div>
<div class="gl" style="left:334.50px;top:269.60px;width:1px;height:52.25px"></div>
<div class="gl" style="left:381.00px;top:269.60px;width:1px;height:52.25px"></div>
<div class="gl" style="left:424.75px;top:269.60px;width:1px;height:52.25px"></div>
<div class="gl" style="left:469.00px;top:269.60px;width:1px;height:52.25px"></div>
<div class="gl" style="left:513.10px;top:269.60px;width:1px;height:52.25px"></div>
<svg class="a" style="left:16px;top:313px" width="6" height="8"><path d="M1 1.3L4.7 4.3L1 7.2Z" fill="#000"/></svg>
<div class="a" style="left:575px;top:259px;width:10px;height:69px;background:#fbf8ee"></div>
<div class="a" style="left:575.5px;top:260px;width:9px;height:9px;background:#c8d4fc;border-radius:1px"></div>
<svg class="a" style="left:575px;top:260px" width="10" height="9"><path d="M2.8 5.6L5 3.4L7.2 5.6" stroke="#4d6185" stroke-width="1.2" fill="none"/></svg>
<div class="a" style="left:575.5px;top:314.2px;width:9px;height:3.4px;background:#c8d4fc;border-radius:1px"></div>
<div class="a" style="left:575.5px;top:318.6px;width:9px;height:7.6px;background:#c8d4fc;border-radius:1px"></div>
<svg class="a" style="left:575px;top:318.4px" width="10" height="8"><path d="M2.8 3L5 5.2L7.2 3" stroke="#4d6185" stroke-width="1.2" fill="none"/></svg>

<!-- group boxes -->
<div class="grp" style="left:14.5px;top:346.5px;width:258px;height:67px"></div>
<div class="a" style="left:18px;top:341.5px;font-size:8.3px;line-height:10px;color:#a03838;background:#99cccc;padding:0 1px;-webkit-text-stroke:0.2px #a03838">手动测试</div>
<div class="a" style="left:28px;top:353.5px;width:207.5px;height:9.5px;background:#fff;border-top:1px solid #9a8c78;border-left:1px solid #9a8c78;border-bottom:1px solid #f4f0e0"></div>
<svg class="a" style="left:27px;top:353px" width="7" height="12"><path d="M1 0.5H5.5V8.5L3.2 10.8L1 8.5Z" fill="#fdf8e6" stroke="#c8c0a8" stroke-width="0.6"/><path d="M5.6 0.5V8.6L3.3 10.8" stroke="#8a7c60" stroke-width="0.9" fill="none"/></svg>
<div class="a" style="left:29.8px;top:365.3px;width:1.2px;height:2px;background:#404848"></div>
<div class="a" style="left:27.3px;top:366px;width:6px;text-align:center;font-size:9px;line-height:10px;color:#9040a8;-webkit-text-stroke:0.2px #9040a8">0</div>
<div class="a" style="left:50.1px;top:365.3px;width:1.2px;height:1.3px;background:#404848"></div>
<div class="a" style="left:70.4px;top:365.3px;width:1.2px;height:2px;background:#404848"></div>
<div class="a" style="left:67.9px;top:366px;width:6px;text-align:center;font-size:9px;line-height:10px;color:#9040a8;-webkit-text-stroke:0.2px #9040a8">1</div>
<div class="a" style="left:90.7px;top:365.3px;width:1.2px;height:1.3px;background:#404848"></div>
<div class="a" style="left:111.0px;top:365.3px;width:1.2px;height:2px;background:#404848"></div>
<div class="a" style="left:108.5px;top:366px;width:6px;text-align:center;font-size:9px;line-height:10px;color:#9040a8;-webkit-text-stroke:0.2px #9040a8">2</div>
<div class="a" style="left:131.3px;top:365.3px;width:1.2px;height:1.3px;background:#404848"></div>
<div class="a" style="left:151.6px;top:365.3px;width:1.2px;height:2px;background:#404848"></div>
<div class="a" style="left:149.1px;top:366px;width:6px;text-align:center;font-size:9px;line-height:10px;color:#9040a8;-webkit-text-stroke:0.2px #9040a8">3</div>
<div class="a" style="left:171.9px;top:365.3px;width:1.2px;height:1.3px;background:#404848"></div>
<div class="a" style="left:192.2px;top:365.3px;width:1.2px;height:2px;background:#404848"></div>
<div class="a" style="left:189.7px;top:366px;width:6px;text-align:center;font-size:9px;line-height:10px;color:#9040a8;-webkit-text-stroke:0.2px #9040a8">4</div>
<div class="a" style="left:212.5px;top:365.3px;width:1.2px;height:1.3px;background:#404848"></div>
<div class="a" style="left:232.8px;top:365.3px;width:1.2px;height:2px;background:#404848"></div>
<div class="a" style="left:230.3px;top:366px;width:6px;text-align:center;font-size:9px;line-height:10px;color:#9040a8;-webkit-text-stroke:0.2px #9040a8">5</div>
<div class="btn" style="left:192px;top:390.5px;width:42.5px;height:13px"></div><div class="a" style="left:201px;top:392px;font-size:8.5px;line-height:10px;color:#aca89c">采</div><div class="a" style="left:217.5px;top:392px;font-size:8.5px;line-height:10px;color:#aca89c">样</div>

<div class="grp" style="left:305px;top:346.5px;width:262px;height:67px"></div>
<div class="a" style="left:308px;top:341.5px;font-size:8.3px;line-height:10px;color:#804848;background:#99cccc;padding:0 1px;-webkit-text-stroke:0.2px #804848">自动测试</div>
<div class="a" style="left:309px;top:354px;font-size:8px;line-height:10px;color:#f838f8">设定电流</div>
<div class="a" style="left:346px;top:354px;font:8.5px/10px 'Liberation Sans';letter-spacing:-0.15px;color:#f838f8">0.00A</div>
<div class="a" style="left:375px;top:354px;font-size:8px;line-height:10px;color:#2424f0">起始电流</div>
<div class="a" style="left:411px;top:354px;font:8.5px/10px 'Liberation Sans';letter-spacing:-0.15px;color:#2424f0">0.00A</div>
<div class="a" style="left:468px;top:354px;font-size:8px;line-height:10px;color:#2424f0">终止电流</div>
<div class="a" style="left:505.5px;top:354px;font:8.5px/10px 'Liberation Sans';letter-spacing:-0.15px;color:#2424f0">1.00A</div>

<div class="btn" style="left:333px;top:389.2px;width:37.5px;height:14.4px"></div>
<div class="a" style="left:336px;top:392.4px;width:4.4px;height:4.4px;background:#6c6c6c"></div>
<div class="a" style="left:346.5px;top:391.5px;font-size:9px;line-height:10px;color:#2424ff;-webkit-text-stroke:0.12px #2424ff">采</div><div class="a" style="left:358.8px;top:391.5px;font-size:9px;line-height:10px;color:#2424ff;-webkit-text-stroke:0.12px #2424ff">样</div>
<div class="btn" style="left:417px;top:389.2px;width:38px;height:14.4px"></div>
<div class="a" style="left:420.8px;top:392.4px;width:4px;height:4px;background:#00ee00"></div>
<div class="a" style="left:431px;top:391.5px;font-size:9px;line-height:10px;color:#2424ff;-webkit-text-stroke:0.12px #2424ff">暂&nbsp;停</div>
<div class="btn" style="left:469px;top:389px;width:32.6px;height:14.6px"></div>
<div class="a" style="left:473px;top:391.5px;font-size:8.2px;line-height:10px;color:#2424ff;-webkit-text-stroke:0.12px #2424ff">零电流</div>
<div class="a" style="left:515.2px;top:390px;width:38.4px;height:13.6px;border:1px solid #383838;background:#ece9d8"><div class="a" style="left:0;top:0;right:0;bottom:0;border:1px solid;border-color:#fff #8c887c #8c887c #fff"></div><div class="a" style="left:1.4px;top:1px;width:33.6px;height:9.2px;border:1px solid #b8b468"></div></div>
<div class="a" style="left:522px;top:391.5px;font-size:9px;line-height:10px;color:#2424ff;-webkit-text-stroke:0.12px #2424ff">设&nbsp;&nbsp;&nbsp;置</div>
</body></html>
